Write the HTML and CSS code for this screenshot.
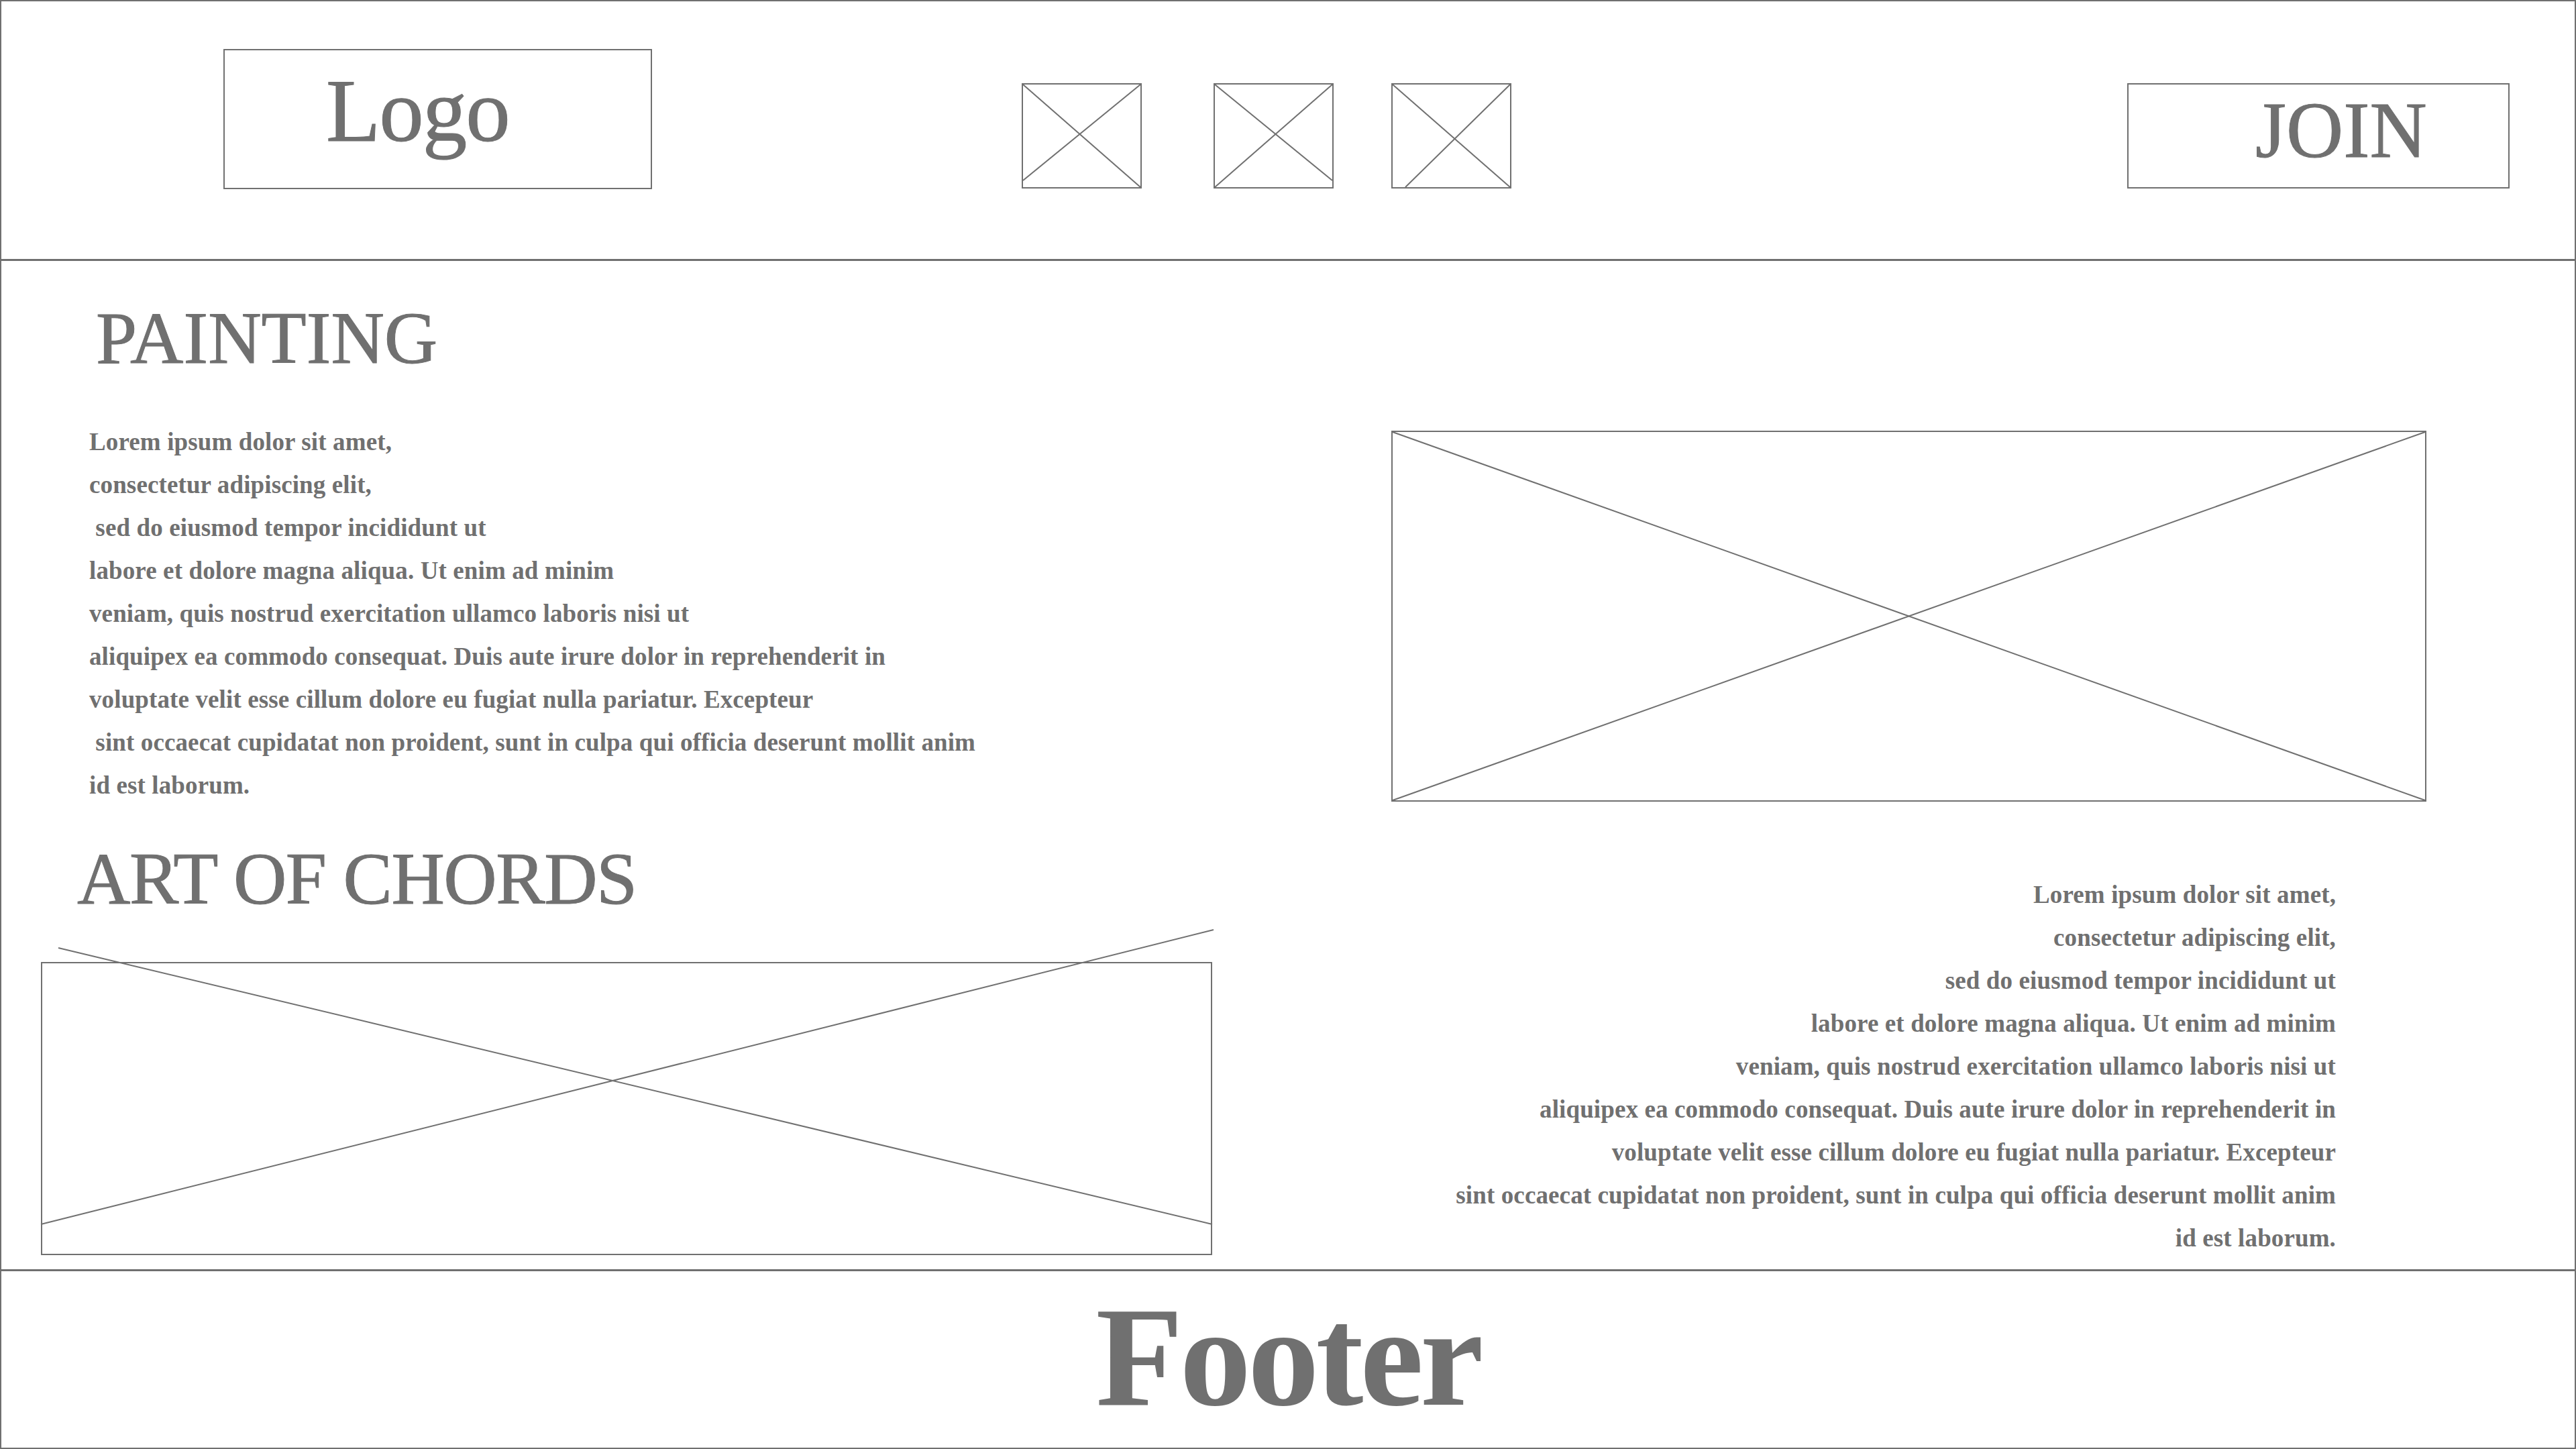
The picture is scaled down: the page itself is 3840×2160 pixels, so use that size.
FILE: index.html
```html
<!DOCTYPE html>
<html lang="en">
<head>
  <meta charset="UTF-8" />
  <meta name="viewport" content="width=device-width, initial-scale=1.0"/>
  <title>Wireframe</title>
  <link rel="stylesheet" href="styles.css">
</head>
<body>
  <div class="page">
    <header class="header">
      <div class="logo">Logo</div>

      <!-- nav placeholders -->
      <nav class="nav">
        <div class="nav-item">
          <svg class="ph-lines" width="175" height="153">
            <line x1="0" y1="0" x2="175" y2="153" />
            <line x1="175" y1="0" x2="0" y2="143" />
          </svg>
        </div>
        <div class="nav-item">
          <svg class="ph-lines" width="175" height="153">
            <line x1="0" y1="0" x2="175" y2="143" />
            <line x1="0" y1="153" x2="175" y2="0" />
          </svg>
        </div>
        <div class="nav-item">
          <svg class="ph-lines" width="175" height="153">
            <line x1="0" y1="0" x2="175" y2="153" />
            <line x1="175" y1="0" x2="19" y2="153" />
          </svg>
        </div>
      </nav>

      <div class="join">JOIN</div>
    </header>

    <main class="main">
      <section class="col-left">
        <h2 class="title title-painting">PAINTING</h2>
        <p class="text">
          Lorem ipsum dolor sit amet,<br>
          consectetur adipiscing elit,<br>
          &nbsp;sed do eiusmod tempor incididunt ut<br>
          labore et dolore magna aliqua. Ut enim ad minim<br>
          veniam, quis nostrud exercitation ullamco laboris nisi ut<br>
          aliquipex ea commodo consequat. Duis aute irure dolor in reprehenderit in<br>
          voluptate velit esse cillum dolore eu fugiat nulla pariatur. Excepteur<br>
          &nbsp;sint occaecat cupidatat non proident, sunt in culpa qui officia deserunt mollit anim<br>
          id est laborum.
        </p>
        <h2 class="title title-chords">ART OF CHORDS</h2>
        <div class="ph ph-chords">
          <svg class="ph-lines" width="1742" height="433">
            <line x1="24" y1="-23" x2="1744" y2="389" />
            <line x1="-2" y1="389" x2="1746" y2="-50" />
          </svg>
        </div>
      </section>

      <section class="col-right">
        <div class="ph ph-painting">
          <svg class="ph-lines" width="1539" height="549">
            <line x1="0" y1="0" x2="1539" y2="549" />
            <line x1="0" y1="549" x2="1539" y2="0" />
          </svg>
        </div>
        <p class="text text-right">
          Lorem ipsum dolor sit amet,<br>
          consectetur adipiscing elit,<br>
          sed do eiusmod tempor incididunt ut<br>
          labore et dolore magna aliqua. Ut enim ad minim<br>
          veniam, quis nostrud exercitation ullamco laboris nisi ut<br>
          aliquipex ea commodo consequat. Duis aute irure dolor in reprehenderit in<br>
          voluptate velit esse cillum dolore eu fugiat nulla pariatur. Excepteur<br>
          sint occaecat cupidatat non proident, sunt in culpa qui officia deserunt mollit anim<br>
          id est laborum.
        </p>
      </section>
    </main>

    <footer class="footer">Footer</footer>
  </div>
</body>
</html>
```

FILE: styles.css
```css
* { margin: 0; padding: 0; box-sizing: border-box; }
body {
  font-family: "Liberation Serif", "Times New Roman", serif;
  color: #707070;
  background: #fff;
}
.page {
  width: 3840px;
  height: 2160px;
  border: 2px solid #707070;
  display: flex;
  flex-direction: column;
}

/* header */
.header {
  height: 387px;
  border-bottom: 3px solid #707070;
  display: flex;
  align-items: flex-start;
}
.logo {
  width: 639px;
  height: 209px;
  margin: 71px 0 0 331px;
  padding: 24px 0 0 151px;
  border: 2px solid #707070;
  font-size: 133px;
  line-height: 1;
  letter-spacing: -2px;
  -webkit-text-stroke: 1px #707070;
}
.nav {
  display: flex;
  gap: 86px;
  margin: 122px 0 0 551px;
}
.nav-item {
  width: 179px;
  height: 157px;
  border: 2px solid #707070;
}
.nav-item:first-child { margin-right: 21px; }
.join {
  width: 570px;
  height: 157px;
  margin: 122px 97px 0 auto;
  padding: 10px 0 0 189px;
  border: 2px solid #707070;
  font-size: 118px;
  line-height: 1;
  -webkit-text-stroke: 1px #707070;
}

/* placeholders */
.ph { border: 2px solid #707070; }
.ph-lines {
  display: block;
  overflow: visible;
}
.ph-lines line {
  stroke: #707070;
  stroke-width: 2;
}

/* main */
.main {
  flex: 1;
  display: grid;
  grid-template-columns: 2072px 1fr;
}
.title {
  font-size: 110px;
  font-weight: normal;
  line-height: 1;
  -webkit-text-stroke: 1px #707070;
}
.title-painting { margin: 60px 0 0 141px; }
.title-chords {
  margin: 52px 0 0 113px;
  letter-spacing: -1.5px;
}
.text {
  font-size: 37px;
  font-weight: bold;
  line-height: 64px;
  letter-spacing: 0.12px;
}
.col-left .text { margin: 68px 0 0 131px; }
.ph-chords {
  width: 1746px;
  height: 437px;
  margin: 69px 0 0 59px;
}
.ph-painting {
  width: 1543px;
  height: 553px;
  margin-top: 253px;
}
.text-right {
  width: 1543px;
  margin-top: 107px;
  padding-right: 135px;
  text-align: right;
}

/* footer */
.footer {
  height: 266px;
  border-top: 3px solid #707070;
  padding-top: 21px;
  font-size: 213px;
  font-weight: bold;
  line-height: 1;
  letter-spacing: -5px;
  text-align: center;
}
```
